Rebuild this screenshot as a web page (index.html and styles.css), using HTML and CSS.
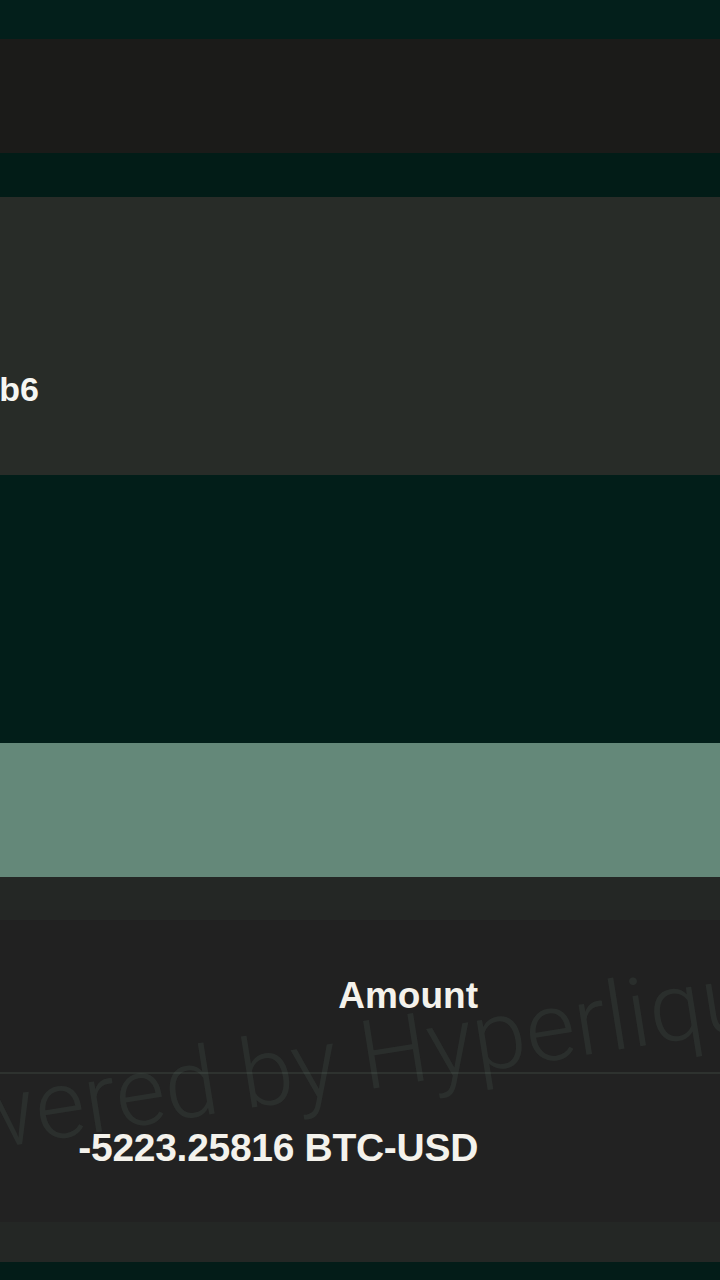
FILE: index.html
```html
<!DOCTYPE html>
<html>
<head>
  <title>Transfer details</title>
  <meta charset="UTF-8">
  <link rel="stylesheet" href="styles.css">
</head>
<body>
  <div class="page">
    <div class="gap gap-top"></div>
    <div class="topbar"></div>
    <div class="gap gap-mid"></div>

    <div class="panel">
      <div class="address">0x7f3c9e1a4d2b6</div>
    </div>

    <div class="gap gap-big"></div>
    <div class="action-bar"></div>

    <div class="table-wrap">
      <div class="watermark">Powered by Hyperliquid</div>
      <div class="trow thead">
        <div class="cell amount">Amount</div>
        <div class="cell"></div>
      </div>
      <div class="trow tbody">
        <div class="cell amount">-5223.25816 BTC-USD</div>
        <div class="cell"></div>
      </div>
    </div>

    <div class="gap gap-end"></div>
  </div>
</body>
</html>
```

FILE: styles.css
```css
body {
  margin: 0;
  background: #021e19;
  font-family: "Liberation Sans", Arial, sans-serif;
  color: #f4f2ec;
}
.page {
  display: flex;
  flex-direction: column;
  width: 720px;
  height: 1280px;
  overflow: hidden;
}
.gap {
  background: #021e19;
}
.gap-top {
  height: 39px;
  background: #031f1b;
}
.gap-mid {
  height: 44px;
  background: #021c17;
}
.gap-big {
  height: 268px;
}
.gap-end {
  height: 18px;
  background: #031c18;
}
.topbar {
  height: 114px;
  background: #1b1b19;
}
.panel {
  height: 278px;
  background: #282c28;
  box-sizing: border-box;
  padding-top: 172px;
}
.address {
  width: 39px;
  overflow: hidden;
  white-space: nowrap;
  direction: rtl;
  font-size: 34px;
  font-weight: bold;
  line-height: 40px;
  color: #f6f6f2;
}
.action-bar {
  height: 134px;
  background: #648879;
}
.table-wrap {
  position: relative;
  overflow: hidden;
  background: #242725;
  padding: 43px 0 40px;
}
.trow {
  display: flex;
  align-items: center;
  background: #212121;
  position: relative;
}
.thead {
  height: 152px;
  border-bottom: 2px solid #2e322f;
}
.tbody {
  height: 148px;
  background: #222222;
}
.cell {
  flex: 1;
}
.cell.amount {
  flex: 0 0 478px;
  text-align: right;
  font-weight: bold;
  white-space: nowrap;
}
.thead .amount {
  font-size: 37px;
}
.tbody .amount {
  font-size: 39px;
  letter-spacing: -0.3px;
}
.watermark {
  position: absolute;
  left: -140px;
  top: 212px;
  z-index: 1;
  font-family: Roboto, sans-serif;
  font-weight: 300;
  font-size: 96px;
  line-height: 1;
  white-space: nowrap;
  color: rgba(130, 170, 150, 0.1);
  transform: rotate(-9deg);
  transform-origin: 0 100%;
  pointer-events: none;
}
```
